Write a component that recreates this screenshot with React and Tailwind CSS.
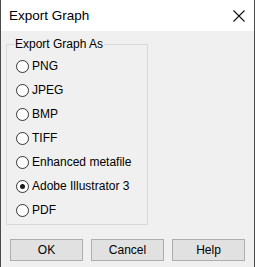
import React from "react";

const options = [
  "PNG",
  "JPEG",
  "BMP",
  "TIFF",
  "Enhanced metafile",
  "Adobe Illustrator 3",
  "PDF",
];

function Radio({ checked }) {
  return (
    <span className="relative w-[13px] h-[13px] rounded-full border border-[#333333] bg-white flex items-center justify-center shrink-0">
      {checked && <span className="w-[5px] h-[5px] rounded-full bg-[#1a1a1a]" />}
    </span>
  );
}

export default function App() {
  return (
    <div
      className="w-[255px] h-[267px] bg-[#f0f0f0] border-l border-r border-[#4a4a4a] flex flex-col overflow-hidden text-[#000]"
      style={{ fontFamily: '"Liberation Sans", Arial, sans-serif' }}
    >
      <div className="h-[31px] bg-white flex items-center justify-between pl-[8px] pr-[9px] shrink-0">
        <span className="text-[13.5px] leading-none">Export Graph</span>
        <svg width="12" height="12" viewBox="0 0 12 12" className="mt-[1px]">
          <path d="M0.5 0.5 L11.5 11.5 M11.5 0.5 L0.5 11.5" stroke="#111" strokeWidth="1.1" fill="none" />
        </svg>
      </div>
      <div className="flex flex-col pl-[5px] pt-[6px]">
        <fieldset className="w-[142px] border border-[#d9d9d9] pl-[7px] pr-0 pt-0 pb-[2px] m-0 min-w-0">
          <legend className="px-[1px] text-[12px] leading-[14px]">Export Graph As</legend>
          <div className="flex flex-col pl-[2px] pt-[3px]">
            {options.map((o, i) => (
              <label key={o} className="h-[24px] flex items-center gap-[3px] text-[12px]">
                <Radio checked={i === 5} />
                <span>{o}</span>
              </label>
            ))}
          </div>
        </fieldset>
        <div className="flex gap-[8px] pl-[4px] mt-[14px]">
          {["OK", "Cancel", "Help"].map((b) => (
            <button
              key={b}
              className="w-[73px] h-[22px] bg-[#e1e1e1] border border-[#adadad] text-[12px] flex items-center justify-center"
            >
              {b}
            </button>
          ))}
        </div>
      </div>
    </div>
  );
}
